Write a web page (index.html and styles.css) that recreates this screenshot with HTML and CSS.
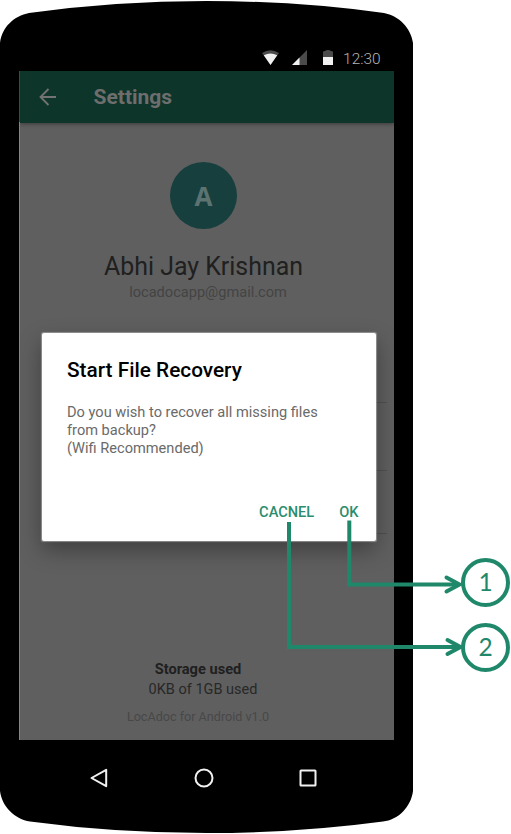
FILE: index.html
```html
<!DOCTYPE html>
<html lang="en">
<head>
<meta charset="utf-8">
<title>Settings</title>
<link rel="stylesheet" href="styles.css">
</head>
<body>
<main class="stage">
  <div class="phone">
    <svg class="phone-body" viewBox="0 0 413 834" aria-hidden="true"><path d="M0 43C2 27 14 16 29 13Q115 1 206.500 1T384 13C399 16 411 28 413 43V791C411 807 398 820 383 821.500Q298 833 206.500 833T30 821.500C15 819 2 807 0 791Z"/></svg>
    <div class="status">
      <svg class="signals" viewBox="0 0 72 15" aria-hidden="true">
        <path fill="#4b4b4b" d="M0 3Q8.500-2.500 17 3L8.500 15ZM45 0V15H30Z"/>
        <path fill="#f1f1f1" d="M1.800 5.200Q8.500 2 15.200 5.200L8.500 15ZM37.500 7.500V15H30Z"/>
      </svg>
      <svg class="battery" viewBox="0 0 10 15" aria-hidden="true"><path fill="#4b4b4b" d="M0 7V2Q0 1 2 1Q3 0 5 0T8 1Q10 1 10 2V7Z"/><path fill="#f1f1f1" d="M0 7H10V15H0Z"/></svg>
      <span class="clock">12:30</span>
    </div>
    <section class="screen">
      <header class="bar">
        <svg class="back" viewBox="0 0 18 18" aria-hidden="true"><path d="M17 9H2M9.500 1L1.500 9L9.500 17"/></svg>
        <h1>Settings</h1>
      </header>
      <div class="profile">
        <div class="avatar"><span>A</span></div>
        <div class="name"><span>Abhi Jay Krishnan</span></div>
        <div class="email"><span>locadocapp@gmail.com</span></div>
      </div>
      <div class="rows"><i></i><i></i><i></i></div>
      <footer class="storage">
        <b>Storage used</b>
        <span class="quota">0KB of 1GB used</span>
        <span class="version">LocAdoc for Android v1.0</span>
      </footer>
      <div class="dialog">
        <h2>Start File Recovery</h2>
        <p>Do you wish to recover all missing files<br>from backup?<br>(Wifi Recommended)</p>
        <div class="actions"><span class="cancel">CACNEL</span><span class="ok">OK</span></div>
      </div>
    </section>
    <nav class="nav">
      <svg viewBox="0 0 20 20" aria-hidden="true"><path d="M17.200 1.800V18.200L2.500 10Z"/></svg>
      <svg viewBox="0 0 20 20" aria-hidden="true"><circle cx="10" cy="10" r="8.500"/></svg>
      <svg viewBox="0 0 20 20" aria-hidden="true"><rect x="2.500" y="2.500" width="15" height="15" rx=".5"/></svg>
    </nav>
  </div>
  <svg class="lines" viewBox="0 0 511 834" aria-hidden="true">
    <path d="M349.300 520.500V584.500H459M289 522V647H459"/>
    <path class="heads" d="M446.500 577.500L459.500 584.500L446.500 591.500M447.500 640L460.500 647L447.500 654"/>
  </svg>
  <aside class="callouts"><div>1</div><div>2</div></aside>
</main>
</body>
</html>
```
FILE: styles.css
```css
* { box-sizing: border-box; }
body { margin: 0; background: #fff; font-family: Roboto, "Liberation Sans", sans-serif; }
.stage { position: relative; display: flex; width: 511px; height: 834px; overflow: hidden; }
.phone { position: relative; width: 413px; height: 834px; padding: 47px 19px 0; display: flex; flex-direction: column; flex: none; }
.phone-body { position: absolute; inset: 0; width: 413px; height: 834px; }
.status { position: relative; height: 24px; display: flex; align-items: center; justify-content: flex-end; padding-right: 13.500px; }
.signals { width: 72px; height: 15px; margin: -3px -11px 0 0; }
.battery { width: 10px; height: 15px; margin-top: -3px; position: relative; }
.clock { margin-left: 10.500px; font-size: 15.400px; font-weight: 300; color: #b4b4b4; }
.screen { position: relative; width: 375px; height: 669px; background: #5f5f5f; border-left: 1px solid #858585; display: flex; flex-direction: column; overflow: hidden; }
.bar { height: 52px; flex: none; display: flex; align-items: center; padding-left: 19px; background: #0d3529; box-shadow: 0 1px 4px rgba(0, 0, 0, .4); }
.screen { border-image: linear-gradient(#1c5c47 52px, #858585 52px) 1; }
.back { width: 18px; height: 18px; fill: none; stroke: #737373; stroke-width: 1.800; }
h1 { margin: 0 0 0 36.500px; font-size: 21px; line-height: 26px; font-weight: 700; color: #6e6e6e; }
.profile { padding-top: 39px; display: flex; flex-direction: column; align-items: center; margin-right: 7px; }
.avatar { width: 67px; height: 67px; border-radius: 50%; background: #173f3e; color: #5c7371; display: flex; align-items: center; justify-content: center; font: 700 26px/1 "Open Sans", sans-serif; }
.name { margin-top: 22px; font-size: 24.900px; line-height: 32px; color: #202020; white-space: nowrap; }
.email { margin-left: 9px; font-size: 14.600px; line-height: 18px; color: #444; }
.rows { position: absolute; top: 331px; left: 190px; right: 7px; display: grid; grid-template-rows: 68px 63px 1px; }
.rows i { height: 1px; background: #505050; }
.storage { margin-top: auto; height: 80px; display: flex; flex-direction: column; align-items: center; margin-right: 18px; color: #202020; }
.storage b { font-size: 14.600px; line-height: 18px; }
.quota { margin: 3px 0 0 10px; font-size: 14.500px; line-height: 18px; color: #282828; }
.version { margin-top: 9px; font-size: 12.600px; line-height: 18px; color: #484848; }
.dialog { position: absolute; left: 22px; top: 262px; width: 333.500px; height: 208px; padding: 24px 25px; background: #fff; border-radius: 2px; box-shadow: 0 0 1px .5px rgba(170, 170, 170, .7), 0 9px 22px rgba(0, 0, 0, .35); display: flex; flex-direction: column; }
h2 { margin: 0; font-size: 20.800px; line-height: 26px; font-weight: 500; color: #000; white-space: nowrap; }
.dialog p { margin: 20px 0 0; font-size: 14.600px; line-height: 18px; color: #6a6a6a; white-space: nowrap; }
.actions { margin-top: 46px; display: flex; justify-content: flex-end; margin-right: -8px; gap: 25px; font-size: 14.600px; line-height: 18px; font-weight: 500; color: #2a8d6e; }
.nav { position: relative; display: flex; justify-content: space-between; padding: 28px 76px 0 70px; }
.nav svg { width: 20px; height: 20px; fill: none; stroke: #f1f1f1; stroke-width: 2; stroke-linejoin: round; }
.lines { position: absolute; inset: 0; width: 511px; height: 834px; fill: none; stroke: #1f886b; stroke-width: 4; }
.heads { stroke-linecap: round; }
.callouts { position: relative; margin: 558px 0 0 48px; width: 49px; display: flex; flex-direction: column; gap: 16px; }
.callouts div { width: 49px; height: 49px; flex: none; border: 4px solid #1f886b; border-radius: 50%; display: flex; align-items: center; justify-content: center; font: 24.500px/1 Lato, sans-serif; color: #1f886b; }
```
